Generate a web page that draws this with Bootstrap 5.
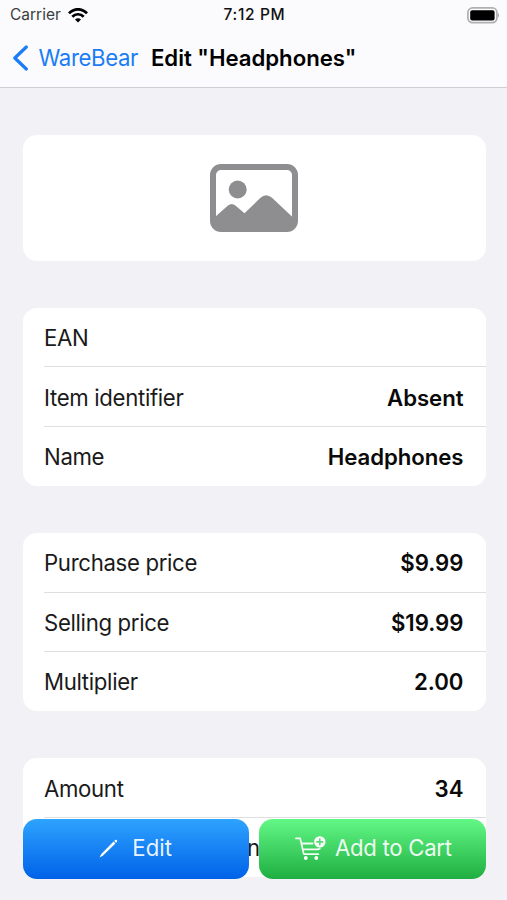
<!DOCTYPE html>
<html lang="en">
<head>
<meta charset="utf-8">
<meta name="viewport" content="width=device-width, initial-scale=1">
<title>WareBear</title>
<link href="https://cdn.jsdelivr.net/npm/bootstrap@5.3.0/dist/css/bootstrap.min.css" rel="stylesheet">
<style>
body { font-family: Inter, "Liberation Sans", sans-serif; background: #f1f1f6; color: #1a1a1a; font-size: 22.2px; line-height: 28px; letter-spacing: -.33px; height: 900px; }
.top-bar { height: 88px; background: #fbfbfd; border-bottom: 1px solid #cfcfd3; }
.status { height: 30px; font-size: 15.5px; line-height: 30px; padding: 0 8px 0 10px; letter-spacing: 0; }
.status-side { flex: 1 1 0; color: #3c3c3e; gap: 7px; }
.clock { font-weight: 500; color: #111; letter-spacing: .65px; }
.title-row { height: 56px; padding-left: 12px; }
.back { color: #1a7df5; text-decoration: none; gap: 9.5px; letter-spacing: -.4px; }
.title-text { font-weight: 600; color: #000; margin-left: 13px; letter-spacing: -.02px; }
.sheet { padding: 47px 21.5px 0 22.5px; gap: 47px; }
.panel { border: 0; border-radius: 14px; background: #fff; overflow: hidden; }
.photo { height: 126px; }
.item { height: 59.4px; margin-left: 21.5px; padding: 2px 22px 0 0; border: 0; border-bottom: 1.4px solid #dfdfe1; background: #fff; color: inherit; }
.item:last-child { border-bottom-color: transparent; }
.val { font-weight: 600; color: #0a0a0a; letter-spacing: -.05px; }
.num { letter-spacing: 0; }
.tail { padding-left: 203px; }
.actions { left: 22.5px; right: 21.5px; bottom: 21.5px; gap: 10.5px; }
.action { flex: 1 1 0; height: 60px; border: 0; border-radius: 14px; font-size: inherit; line-height: 28px; padding: 0; }
.action span { position: relative; top: -.5px; }
.edit { background: linear-gradient(#2ea3ff, #0062e8); gap: 14px; }
.cart { background: linear-gradient(#62f886, #1fae41); gap: 9px; letter-spacing: -.3px; }
.cart svg { margin-left: 2px; }
.action, .action:hover { color: rgba(255,255,255,.93); }
</style>
<script src="https://cdn.jsdelivr.net/npm/bootstrap@5.3.0/dist/js/bootstrap.bundle.min.js"></script>
</head>
<body class="position-relative overflow-hidden">
<header class="top-bar">
  <div class="status d-flex align-items-center">
    <div class="status-side d-flex align-items-center"><span>Carrier</span>
      <svg width="20" height="15" viewBox="0 0 20 15" fill="none" stroke="#000" stroke-width="2.7"><path d="M1 5.4C6-.1 14-.1 19 5.4"/><path d="M4.3 8.8c3.2-3.4 8.2-3.4 11.4 0"/><path d="M10 14.6l-3-3.1c1.7-1.6 4.3-1.6 6 0z" fill="#000" stroke="none"/></svg>
    </div>
    <span class="clock">7:12 PM</span>
    <div class="status-side d-flex justify-content-end">
      <svg width="32" height="17" viewBox="0 0 32 17"><rect x=".9" y=".9" width="29" height="14.8" rx="4.6" fill="#fbfbfd" stroke="#b0b0b2" stroke-width="1.7"/><rect x="3.2" y="3.2" width="24.4" height="10.2" rx="2" fill="#000"/><path d="M31 6.300c1.600.7 1.600 3.400 0 4.100z" fill="#aaa"/></svg>
    </div>
  </div>
  <nav class="title-row d-flex align-items-center">
    <a class="back d-flex align-items-center" href="#"><svg width="17" height="26" viewBox="0 0 17 26" fill="none" stroke="#1a7df5" stroke-width="3.2" stroke-linecap="round" stroke-linejoin="round"><path d="M14.3 2L2.8 13l11.5 11"/></svg><span>WareBear</span></a>
    <span class="title-text">Edit "Headphones"</span>
  </nav>
</header>
<main class="sheet d-flex flex-column">
  <section class="panel photo card align-items-center justify-content-center">
    <svg width="88" height="68" viewBox="0 0 88 68"><rect x="3" y="3" width="82" height="62" rx="8" fill="none" stroke="#8e8e90" stroke-width="6"/><circle cx="27.7" cy="25.5" r="9" fill="#8e8e90"/><path d="M5 53L18 41.6q3.800-3.100 7.400 0L34.500 49.200 50.500 33.800q5.500-5 11.500 0L83 53.500V60q0 5-5 5H10q-5 0-5-5z" fill="#8e8e90"/></svg>
  </section>
  <section class="panel list-group">
    <div class="item d-flex align-items-center justify-content-between"><span>EAN</span></div>
    <div class="item d-flex align-items-center justify-content-between"><span>Item identifier</span><span class="val">Absent</span></div>
    <div class="item d-flex align-items-center justify-content-between"><span>Name</span><span class="val">Headphones</span></div>
  </section>
  <section class="panel list-group">
    <div class="item d-flex align-items-center justify-content-between"><span>Purchase price</span><span class="val num">$9.99</span></div>
    <div class="item d-flex align-items-center justify-content-between"><span>Selling price</span><span class="val num">$19.99</span></div>
    <div class="item d-flex align-items-center justify-content-between"><span>Multiplier</span><span class="val num">2.00</span></div>
  </section>
  <section class="panel list-group">
    <div class="item d-flex align-items-center justify-content-between"><span>Amount</span><span class="val num">34</span></div>
    <div class="item d-flex align-items-center"><span class="tail">n</span></div>
  </section>
</main>
<div class="actions position-absolute d-flex">
  <button class="action edit btn d-flex align-items-center justify-content-center"><svg width="19" height="19" viewBox="0 0 19 19"><path d="M14.600 2.600l1.800 1.800L3.800 16.700.5 18.500 2.300 15z" fill="#fff"/><path d="M15.300 1.900l.8-.8c1.100-.8 2.600.7 1.800 1.800l-.8.8z" fill="#fff"/></svg><span>Edit</span></button>
  <button class="action cart btn d-flex align-items-center justify-content-center"><svg width="31" height="25" viewBox="0 0 31 25" fill="none" stroke="#fff" stroke-opacity=".93" stroke-width="1.8" stroke-linecap="round" stroke-linejoin="round"><path d="M1 2.400h4.200l3.600 15.700h14.500M6.600 7.500h11M7.900 13.300h14.600l2.300-.7"/><circle cx="10.800" cy="22" r="1.900" fill="#fff" stroke="none"/><circle cx="21.300" cy="22" r="1.900" fill="#fff" stroke="none"/><circle cx="24.800" cy="5.900" r="5.700" fill="#fff" stroke="none"/><path d="M24.800 3v5.800M21.900 5.900h5.800" stroke="#46d96a" stroke-width="1.600"/></svg><span>Add to Cart</span></button>
</div>
</body>
</html>
